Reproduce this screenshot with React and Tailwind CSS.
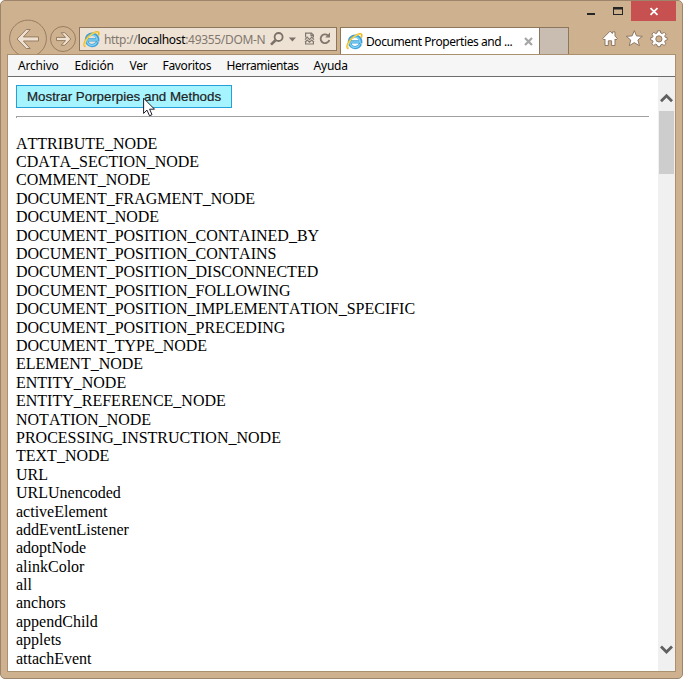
import React from "react";

const UI = "font-['Noto_Sans','Open_Sans',sans-serif]";

const menu = [
  { label: "Archivo", cls: "w-[56.5px] tracking-[-0.2px]" },
  { label: "Edición", cls: "w-[55px] tracking-[-0.2px]" },
  { label: "Ver", cls: "w-[33px] tracking-[-0.3px]" },
  { label: "Favoritos", cls: "w-[64px] tracking-[-0.35px]" },
  { label: "Herramientas", cls: "w-[87px] tracking-[-0.45px]" },
  { label: "Ayuda", cls: "tracking-[-0.2px]" },
];

const members = [
  "ATTRIBUTE_NODE",
  "CDATA_SECTION_NODE",
  "COMMENT_NODE",
  "DOCUMENT_FRAGMENT_NODE",
  "DOCUMENT_NODE",
  "DOCUMENT_POSITION_CONTAINED_BY",
  "DOCUMENT_POSITION_CONTAINS",
  "DOCUMENT_POSITION_DISCONNECTED",
  "DOCUMENT_POSITION_FOLLOWING",
  "DOCUMENT_POSITION_IMPLEMENTATION_SPECIFIC",
  "DOCUMENT_POSITION_PRECEDING",
  "DOCUMENT_TYPE_NODE",
  "ELEMENT_NODE",
  "ENTITY_NODE",
  "ENTITY_REFERENCE_NODE",
  "NOTATION_NODE",
  "PROCESSING_INSTRUCTION_NODE",
  "TEXT_NODE",
  "URL",
  "URLUnencoded",
  "activeElement",
  "addEventListener",
  "adoptNode",
  "alinkColor",
  "all",
  "anchors",
  "appendChild",
  "applets",
  "attachEvent",
];

function IELogo() {
  return (
    <svg width="17" height="17" viewBox="0 0 17 17" className="shrink-0">
      <path d="M14.4 10.9A5.7 5.7 0 1 1 14.8 8.9H5" fill="none" stroke="#3c9fd6" strokeWidth="3.2" />
      <path d="M13.8 11.2A5.2 5.2 0 1 1 14.2 8.9H5" fill="none" stroke="#7fd0f5" strokeWidth="1.5" />
      <path d="M2.5 15.6C-.2 14.7 1.4 9.5 5.7 5.4C9.6 1.7 14.2 0 15.4 1.4C16 2.2 15.7 3.4 15.1 4.6" fill="none" stroke="#edb92c" strokeWidth="1.8" />
      <path d="M1.8 14.7C1.2 12 3.6 7.9 6.5 5.2C9.8 2.2 13.4.8 15 1.6" fill="none" stroke="#ffe05a" strokeWidth="1" />
    </svg>
  );
}

function NavButtons() {
  return (
    <svg width="71" height="53" viewBox="8 1 71 53" className="block shrink-0">
      <g stroke="#977c60" fill="none" strokeWidth="1">
        <circle cx="28" cy="38.5" r="18.4" />
        <circle cx="63" cy="39" r="12.5" />
      </g>
      <g fill="#efe1d1" stroke="#977c60" strokeWidth="1" strokeLinejoin="round">
        <path d="M17 39L26.2 29.5H30.2L23.4 36.9H38.5V41H23.4L30.2 48.5H26.2Z" />
        <path d="M70.8 39L64.8 32.7H61.2L65.5 37.4H56.5V40.6H65.5L61.2 45.3H64.8Z" />
      </g>
    </svg>
  );
}

function AddressIcons() {
  return (
    <svg width="64" height="20" viewBox="270 30 64 20" className="block shrink-0">
      <circle cx="278.6" cy="38" r="4" fill="none" stroke="#7b7168" strokeWidth="1.8" />
      <path d="M275.5 41.3L271 45.6" stroke="#7b7168" strokeWidth="2.6" />
      <path d="M288.8 38.6H296L292.4 42.4Z" fill="#7b7168" />
      <g fill="none" stroke="#82786e" strokeWidth="1.2">
        <path d="M305.6 38.6V34.2H311.5L313.4 36.1V38.6M305.6 42.1V45H313.4V42.1M311 34.2V36.6H313.4" />
        <path d="M305 40.6L307.2 38.2L309.5 40.6L311.8 38.2L314 40.6M305 43.2L307.2 41L309.5 43.2L311.8 41L314 43.2" />
      </g>
      <path d="M327.8 36.3A4.4 4.4 0 1 0 329.3 40.9" fill="none" stroke="#82786e" strokeWidth="1.9" />
      <path d="M325.2 38.5H330V33.6Z" fill="#82786e" />
    </svg>
  );
}

function Caption() {
  return (
    <div className="flex h-5 shrink-0">
      <svg width="53" height="20" viewBox="578 1 53 20" className="block">
        <rect x="587" y="13" width="8" height="2" fill="#252525" />
        <path d="M613 7H623V15H613ZM614 9.5V14H622V9.5Z" fill="#252525" fillRule="evenodd" />
      </svg>
      <div className="h-5 w-[45px] bg-[#c75050]">
        <svg width="45" height="20" viewBox="631 1 45 20" className="block">
          <path d="M650.5 8.2L657.5 14.8M657.5 8.2L650.5 14.8" stroke="#fff" strokeWidth="1.8" />
        </svg>
      </div>
    </div>
  );
}

function Tools() {
  return (
    <svg width="75" height="24" viewBox="599 27 75 24" className="block">
      <g fill="#fff" stroke="#8e7865" strokeWidth="1" strokeLinejoin="round">
        <path d="M602.8 38.4L610 31.2L612.4 33.5V31.9H615V36.1L617.3 38.4L616.1 40L615 39V45.5H611.6V40.8H608.3V45.5H605V39L604 40Z" />
        <path d="M634.3 30.6L636.5 35.9L642.3 36.3L637.9 40L639.4 45.7L634.3 42.6L629.3 45.7L630.7 40L626.3 36.3L632.1 35.9Z" />
        <path fillRule="evenodd" d="M657.5 30.8H660.3L660.8 33L662.2 33.6L664.2 32.3L666 34.2L664.7 36.1L665.3 37.3L667.2 37.7V40L665.3 40.5L664.7 41.8L665.9 43.8L664.1 45.5L662.2 44.2L660.8 44.8L660.3 46.7H657.5L657 44.8L655.6 44.2L653.7 45.5L651.9 43.7L653.1 41.8L652.5 40.5L650.7 40V37.7L652.5 37.3L653.1 36.1L651.9 34.2L653.7 32.3L655.6 33.6L657 33ZM658.9 35.8A3.1 3.1 0 1 0 658.9 42A3.1 3.1 0 1 0 658.9 35.8Z" />
      </g>
    </svg>
  );
}

function Header() {
  return (
    <header className="flex h-[53px] shrink-0 pl-[7px]">
      <NavButtons />
      <div className={`mt-[26px] flex h-6 w-[258px] shrink-0 items-center border border-[#8e765c] bg-[#eee2d5] pl-[3px] ${UI}`}>
        <IELogo />
        <div className="ml-[4px] w-[162px] whitespace-nowrap pt-px text-[12px] leading-[20px] tracking-[-0.32px] text-[#81776d]">
          http://<span className="text-black">localhost</span>:49355/DOM-N
        </div>
        <div className="ml-[4px]">
          <AddressIcons />
        </div>
      </div>
      <div className={`ml-[3px] mt-[26px] flex h-[27px] w-[200px] shrink-0 items-center border-x border-t border-[#8e765c] bg-white pl-[5px] ${UI}`}>
        <IELogo />
        <span className="ml-[3px] w-[158px] whitespace-nowrap pt-px text-[12px] leading-[20px] tracking-[-0.42px] text-black">Document Properties and ...</span>
        <svg width="9" height="9" viewBox="0 0 9 9" className="shrink-0">
          <path d="M1 1L8 8M8 1L1 8" stroke="#a6a6a6" strokeWidth="2.2" />
        </svg>
      </div>
      <div className="mt-[26px] h-[27px] w-[29px] shrink-0 border-r border-t border-[#8e765c] bg-[#c8bdb0]" />
      <div className="ml-auto mr-[6px] flex flex-col items-end">
        <Caption />
        <div className="mt-[6px] pr-[2px]">
          <Tools />
        </div>
      </div>
    </header>
  );
}

function Scrollbar() {
  return (
    <div className="flex w-[17px] shrink-0 flex-col items-center bg-[#f0f0f0]">
      <svg width="17" height="34" viewBox="0 0 17 34" className="block shrink-0">
        <path d="M3 24.3L8.5 18.8L14 24.3" fill="none" stroke="#606060" strokeWidth="2.8" />
      </svg>
      <div className="h-[63px] w-[15px] shrink-0 bg-[#cdcdcd]" />
      <svg width="17" height="34" viewBox="0 0 17 34" className="mt-auto block shrink-0">
        <path d="M3 9.6L8.5 15.1L14 9.6" fill="none" stroke="#606060" strokeWidth="2.8" />
      </svg>
    </div>
  );
}

export default function App() {
  return (
    <div className="flex h-[679px] w-[683px] flex-col overflow-hidden rounded-[5px] border border-[#9d846a] bg-[#ceb290]">
      <Header />
      <div className="mx-[6px] mb-[6px] flex min-h-0 flex-1 flex-col border border-[#ab9070] bg-white">
        <nav className={`flex h-[22px] shrink-0 items-center border-b border-[#6d6d6d] bg-[#f6f6f6] pl-[10px] pt-px text-[12px] leading-[20px] text-black ${UI}`}>
          {menu.map((m) => (
            <span key={m.label} className={`shrink-0 whitespace-nowrap ${m.cls}`}>{m.label}</span>
          ))}
        </nav>
        <div className="flex min-h-0 flex-1">
          <main className="min-w-0 flex-1 overflow-hidden pl-[8px] pr-[9px] pt-[8px] font-['Liberation_Serif',serif] text-[16px] text-black">
            <div className="relative w-[216px]">
              <button className="block h-[23px] w-[216px] whitespace-nowrap border border-[#26a0da] bg-[#a6f4ff] font-['Liberation_Sans',sans-serif] text-[13.33px] leading-[20px] text-[#222] [-webkit-text-stroke:0.2px_#222]">
                Mostrar Porperpies and Methods
              </button>
              <svg width="13" height="20" viewBox="0 0 13 20" className="absolute left-[127px] top-[12px]">
                <path d="M.6 1.2V16.4L4 13.1L6.5 18.8L9 17.7L6.6 12.2H11.5Z" fill="#fff" stroke="#20202c" strokeWidth="1" />
              </svg>
            </div>
            <div className="mt-[8px] h-[2px] border-l border-t border-[#a0a0a0]" />
            <ul className="mt-[16.7px] [font-kerning:none]">
              {members.map((name) => (
                <li key={name} className="h-[18.4px] whitespace-nowrap leading-[18.4px]">{name}</li>
              ))}
            </ul>
          </main>
          <Scrollbar />
        </div>
      </div>
    </div>
  );
}
